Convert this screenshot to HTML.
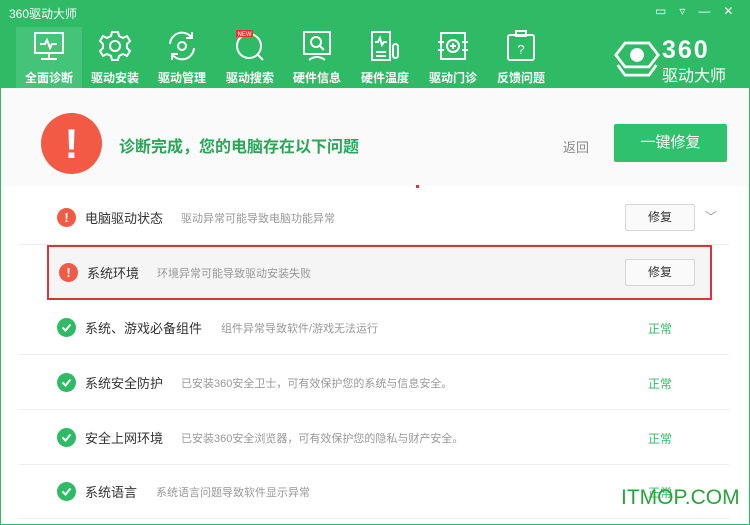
<!DOCTYPE html>
<html><head><meta charset="utf-8"><style>
*{margin:0;padding:0;box-sizing:border-box}
body{width:750px;height:525px;overflow:hidden;font-family:"Liberation Sans","Noto Sans CJK SC",sans-serif;background:#fff;position:relative}
.hd{position:absolute;left:0;top:0;width:750px;height:88px;background:#2fba66}
.title{position:absolute;left:9px;top:5px;color:#fff;font-size:12px}
.tab{position:absolute;top:27px;width:66px;height:61px;text-align:center;color:#fff;font-size:12px}
.tab.act{background:#45c379}
.tab svg{display:block;margin:3px auto 0}
.tab span{position:absolute;left:0;right:0;top:42px;font-weight:bold}
.body{position:absolute;left:0;top:88px;width:750px;height:437px;border:1px solid #2fba66;border-top:none}
.top{position:absolute;left:1px;top:0;width:747px;height:98px;background:#fafafa}
.row{position:absolute;left:18px;width:710px;height:55px;border-bottom:1px solid #eee}
.ic{position:absolute;left:38px;top:18px;width:19px;height:19px;border-radius:50%;color:#fff;font-size:13px;font-weight:bold;text-align:center;line-height:19px}
.ic svg{display:block}
.name{position:absolute;left:66px;top:18px;font-size:13px;color:#333}
.desc{position:absolute;top:20px;font-size:11px;color:#999}
.btn{position:absolute;left:606px;top:14px;width:70px;height:27px;border:1px solid #d6d6d6;background:#fafafa;font-size:12px;text-align:center;line-height:25px;color:#333;border-radius:2px}
.ok{position:absolute;left:629px;top:20px;font-size:12px;color:#2fba66}
</style></head><body>
<div class="hd">
<div class="title">360驱动大师</div>
<div class="tab act" style="left:16px"><svg width="34" height="32" viewBox="0 0 34 32" fill="none" stroke="#fff" stroke-width="2"><rect x="3" y="3" width="28" height="20"/><path d="M17 23v5M9 29h16M8 14h5l2-4 3 8 2-4h5"/></svg><span>全面诊断</span></div>
<div class="tab" style="left:82px"><svg width="34" height="32" viewBox="0 0 34 32" fill="none" stroke="#fff" stroke-width="2"><path d="M14 2h6l1 4 4 2 4-2 3 5-3 3v4l3 3-3 5-4-2-4 2-1 4h-6l-1-4-4-2-4 2-3-5 3-3v-4l-3-3 3-5 4 2 4-2z"/><circle cx="17" cy="16" r="5"/></svg><span>驱动安装</span></div>
<div class="tab" style="left:149px"><svg width="34" height="32" viewBox="0 0 34 32" fill="none" stroke="#fff" stroke-width="2"><path d="M5 14a12 12 0 0 1 22-6M29 18a12 12 0 0 1-22 6M27 2v6h-6M7 30v-6h6"/><circle cx="17" cy="16" r="4"/></svg><span>驱动管理</span></div>
<div class="tab" style="left:217px"><svg width="34" height="32" viewBox="0 0 34 32" fill="none" stroke="#fff" stroke-width="2"><circle cx="16" cy="16" r="12"/><path d="M25 25l5 5"/><rect x="3" y="0" width="17" height="7" fill="#e33" stroke="none"/><text x="11.5" y="6" font-size="6" fill="#fff" stroke="none" text-anchor="middle" font-family="Liberation Sans">NEW</text></svg><span>驱动搜索</span></div>
<div class="tab" style="left:284px"><svg width="34" height="32" viewBox="0 0 34 32" fill="none" stroke="#fff" stroke-width="2"><rect x="4" y="2" width="26" height="22"/><circle cx="16" cy="12" r="5"/><path d="M20 16l4 4M9 30q8-6 16 0"/></svg><span>硬件信息</span></div>
<div class="tab" style="left:352px"><svg width="34" height="32" viewBox="0 0 34 32" fill="none" stroke="#fff" stroke-width="2"><rect x="4" y="2" width="18" height="28"/><path d="M7 12h3l2-4 2 7 2-3h3M8 22h10M8 26h10"/><rect x="25" y="14" width="5" height="14" rx="2.5"/></svg><span>硬件温度</span></div>
<div class="tab" style="left:420px"><svg width="34" height="32" viewBox="0 0 34 32" fill="none" stroke="#fff" stroke-width="2"><rect x="5" y="3" width="24" height="26"/><path d="M2 12h6M2 20h6M26 12h6M26 20h6"/><circle cx="17" cy="16" r="6"/><path d="M17 13v6M14 16h6"/></svg><span>驱动门诊</span></div>
<div class="tab" style="left:488px"><svg width="34" height="32" viewBox="0 0 34 32" fill="none" stroke="#fff" stroke-width="2"><rect x="4" y="5" width="26" height="25" rx="2"/><rect x="12" y="1" width="10" height="5"/><text x="17" y="24" font-size="13" fill="#fff" stroke="none" text-anchor="middle" font-family="Liberation Sans">?</text></svg><span>反馈问题</span></div>
<svg style="position:absolute;left:614px;top:39px" width="46" height="42" viewBox="0 0 50 45" fill="none" stroke="#fff" stroke-width="3"><path d="M12 4h26l10 13-10 13H12L2 17z"/><path d="M4 28l8 11h26l8-11"/><circle cx="25" cy="17" r="6" fill="#fff"/></svg>
<div style="position:absolute;left:662px;top:36px;color:#fff;font-size:25px;font-weight:bold;letter-spacing:2px;line-height:28px">360</div>
<div style="position:absolute;left:662px;top:62px;color:#fff;font-size:16px">驱动大师</div>
<div style="position:absolute;left:655px;top:4px;color:#fff;font-size:12px;letter-spacing:13px">▭▿—✕</div>
</div>
<div class="body">
<div class="top"></div>
<div style="position:absolute;left:40px;top:25px;width:61px;height:61px;border-radius:50%;background:#f25a45;color:#fff;font-size:42px;font-weight:bold;text-align:center;line-height:61px">!</div>
<div style="position:absolute;left:118px;top:45px;color:#2aa65a;font-size:16px;font-weight:bold">诊断完成，您的电脑存在以下问题</div>
<div style="position:absolute;left:562px;top:49px;color:#888;font-size:13px">返回</div>
<div style="position:absolute;left:613px;top:36px;width:113px;height:38px;background:#2fc16b;border-radius:2px;color:#fff;font-size:15px;text-align:center;line-height:38px">一键修复</div>
<div style="position:absolute;left:415px;top:97px;width:3px;height:3px;background:#d33"></div>
<div class="row" style="top:102px"><div class="ic" style="background:#f25a45">!</div><div class="name">电脑驱动状态</div><div class="desc" style="left:162px">驱动异常可能导致电脑功能异常</div><div class="btn">修复</div><div style="position:absolute;left:686px;top:18px;color:#999;font-size:12px">﹀</div></div>
<div class="row" style="top:157px;background:#f5f5f5;border:2px solid #d9343a;left:46px;width:665px"><div class="ic" style="background:#f25a45;left:10px;top:16px">!</div><div class="name" style="left:38px;top:16px">系统环境</div><div class="desc" style="left:108px;top:18px">环境异常可能导致驱动安装失败</div><div class="btn" style="left:576px;top:12px">修复</div></div>
<div class="row" style="top:212px"><div class="ic" style="background:#2fba66"><svg width="19" height="19"><path d="M5.5 9.5l3 3 5-6" fill="none" stroke="#fff" stroke-width="2"/></svg></div><div class="name">系统、游戏必备组件</div><div class="desc" style="left:202px">组件异常导致软件/游戏无法运行</div><div class="ok">正常</div></div>
<div class="row" style="top:267px"><div class="ic" style="background:#2fba66"><svg width="19" height="19"><path d="M5.5 9.5l3 3 5-6" fill="none" stroke="#fff" stroke-width="2"/></svg></div><div class="name">系统安全防护</div><div class="desc" style="left:162px">已安装360安全卫士，可有效保护您的系统与信息安全。</div><div class="ok">正常</div></div>
<div class="row" style="top:322px"><div class="ic" style="background:#2fba66"><svg width="19" height="19"><path d="M5.5 9.5l3 3 5-6" fill="none" stroke="#fff" stroke-width="2"/></svg></div><div class="name">安全上网环境</div><div class="desc" style="left:162px">已安装360安全浏览器，可有效保护您的隐私与财产安全。</div><div class="ok">正常</div></div>
<div class="row" style="top:376px"><div class="ic" style="background:#2fba66"><svg width="19" height="19"><path d="M5.5 9.5l3 3 5-6" fill="none" stroke="#fff" stroke-width="2"/></svg></div><div class="name">系统语言</div><div class="desc" style="left:137px">系统语言问题导致软件显示异常</div><div class="ok">正常</div></div>
<div style="position:absolute;left:620px;top:398px;color:#29a33a;font-size:21px">ITMOP.COM</div>
</div>
</body></html>
